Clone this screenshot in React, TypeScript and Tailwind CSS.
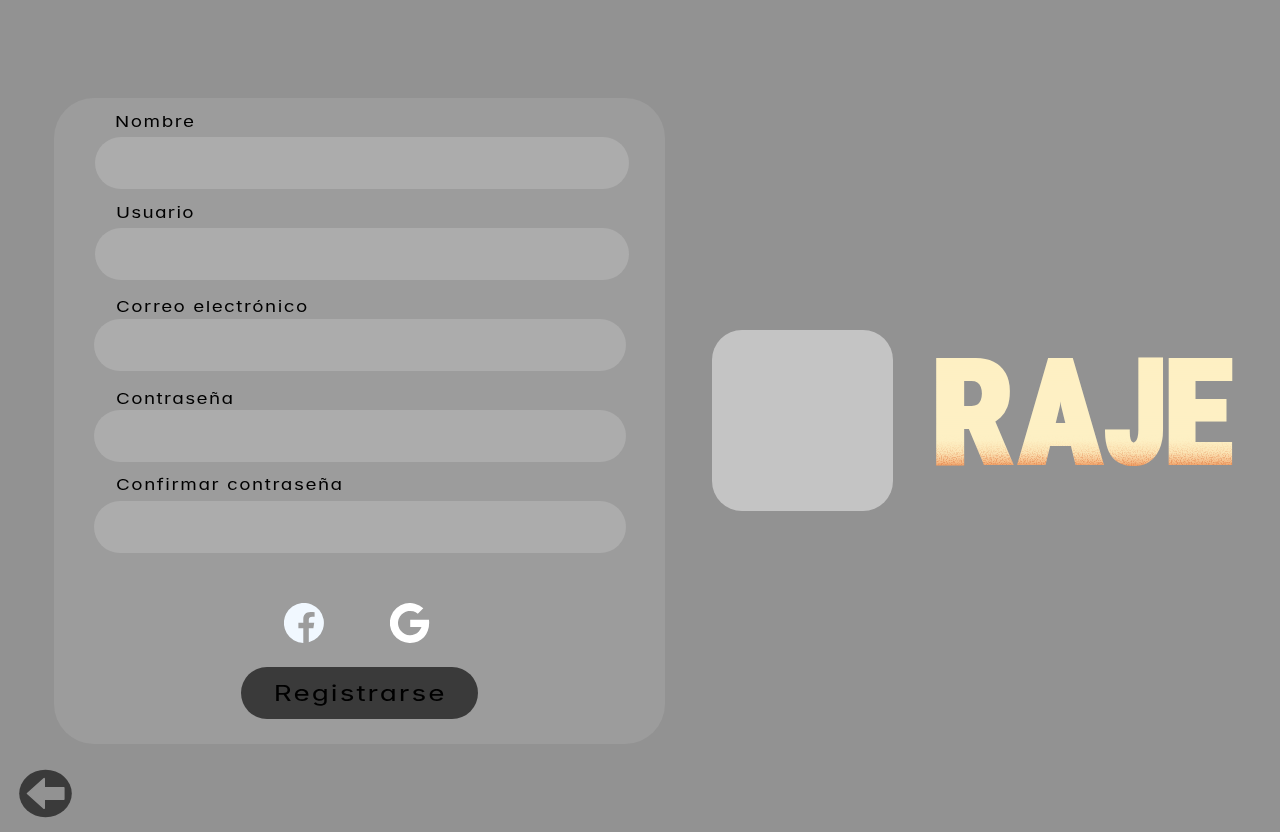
const fields = [
  { label: 'Nombre', type: 'text', labelBox: 'pl-[61px] pt-[14px]', tracking: 'tracking-[1.2px]', input: 'ml-[41px] w-[534px]' },
  { label: 'Usuario', type: 'text', labelBox: 'pl-[62px] pt-[14px]', tracking: 'tracking-[1px]', input: 'ml-[41px] w-[534px]' },
  { label: 'Correo electrónico', type: 'email', labelBox: 'pl-[62px] pt-[17px]', tracking: 'tracking-[1.15px]', input: 'ml-[40px] w-[532px]' },
  { label: 'Contraseña', type: 'password', labelBox: 'pl-[62px] pt-[18px]', tracking: 'tracking-[1.1px]', input: 'ml-[40px] w-[532px]' },
  { label: 'Confirmar contraseña', type: 'password', labelBox: 'pl-[62px] pt-[13px]', tracking: 'tracking-[1.2px]', input: 'ml-[40px] w-[532px]' },
];

function FacebookIcon() {
  return (
    <svg viewBox="0 0 40 40" className="size-10">
      <path
        fill="#f1f8ff"
        d="M19.3 39.9A20 20 0 1 1 24.8 39.3V25.3H29.4L30.2 19.7H24.8V16.7C24.8 14.8 26 13.8 28.2 13.8H30.6V9.2C29.7 9 28.3 8.9 26.6 8.9C21.8 8.9 19.3 11.6 19.3 16.5V19.7H14.4V25.3H19.3Z"
      />
    </svg>
  );
}

function GoogleIcon() {
  return (
    <svg viewBox="0 0 40 40" className="size-10">
      <path
        fill="#fff"
        d="M33.3 5.2L27.8 10.7A12.1 12.1 0 1 0 31.5 24.1H20.2V16.7H39C40.5 29.6 32.6 40 20.2 40A20 20 0 1 1 33.3 5.2Z"
      />
    </svg>
  );
}

function Wordmark() {
  return (
    <svg viewBox="0 0 310 130" className="h-[130px] w-[310px]">
      <defs>
        <linearGradient id="sand" gradientUnits="userSpaceOnUse" x1="0" y1="8" x2="0" y2="116">
          <stop offset="0" stopColor="#fef0c3" />
          <stop offset="0.76" stopColor="#fdf0c4" />
          <stop offset="0.88" stopColor="#fbe3b4" />
          <stop offset="0.96" stopColor="#f5c08c" />
          <stop offset="1" stopColor="#ee9c62" />
        </linearGradient>
        <filter id="grain" filterUnits="userSpaceOnUse" x="0" y="0" width="310" height="130" colorInterpolationFilters="sRGB">
          <feMorphology in="SourceGraphic" operator="dilate" radius="2 0" result="bold" />
          <feTurbulence type="fractalNoise" baseFrequency="0.8" numOctaves="2" seed="4" />
          <feColorMatrix values="0 0 0 0 0.9  0 0 0 0 0.54  0 0 0 0 0.32  4 0 0 0 -1.8" result="dots" />
          <feFlood x="0" y="107" width="310" height="23" floodColor="#fff" />
          <feGaussianBlur stdDeviation="0 9" x="0" y="0" width="310" height="130" result="fade" />
          <feComposite in="dots" in2="fade" operator="in" result="faded" />
          <feComposite in="faded" in2="bold" operator="in" result="cut" />
          <feMerge>
            <feMergeNode in="bold" />
            <feMergeNode in="cut" />
          </feMerge>
        </filter>
      </defs>
      <text
        y="113"
        fill="url(#sand)"
        stroke="url(#sand)"
        strokeWidth="3.8"
        strokeLinejoin="miter"
        filter="url(#grain)"
        className="font-['Roboto',sans-serif] text-[145px] font-black"
      >
        <tspan x="3.2" textLength="79" lengthAdjust="spacingAndGlyphs">R</tspan>
        <tspan x="91.4" textLength="78" lengthAdjust="spacingAndGlyphs">A</tspan>
        <tspan x="176.4" textLength="58.8" lengthAdjust="spacingAndGlyphs">J</tspan>
        <tspan x="236" textLength="64.4" lengthAdjust="spacingAndGlyphs">E</tspan>
      </text>
    </svg>
  );
}

export default function App() {
  return (
    <main className="relative flex h-[832px] w-[1280px] items-start overflow-hidden bg-[#929292] pl-[54px] pt-[98px] font-['Inter',sans-serif] text-black">
      <form className="flex h-[646px] w-[611px] flex-col rounded-[40px] bg-[#9c9c9c]">
        {fields.map((f) => (
          <label key={f.label} className="flex h-[91px] flex-col">
            <span className={`h-[39px] whitespace-nowrap text-[15px] leading-5 ${f.labelBox}`}>
              <span className={`inline-block origin-left scale-x-[1.26] [font-feature-settings:'cv11'] ${f.tracking}`}>
                {f.label}
              </span>
            </span>
            <input type={f.type} className={`h-[52px] rounded-full bg-[#acacac] px-6 outline-none ${f.input}`} />
          </label>
        ))}
        <div className="mt-[50px] flex gap-[66px] pl-[230px]">
          <button type="button" aria-label="Facebook"><FacebookIcon /></button>
          <button type="button" aria-label="Google"><GoogleIcon /></button>
        </div>
        <button
          type="button"
          className="ml-[187px] mt-6 flex h-[52px] w-[237px] items-center justify-center rounded-full bg-[#3a3a3a] text-[22px]"
        >
          <span className="inline-block scale-x-[1.27] pl-px tracking-[1.6px] [font-feature-settings:'cv11']">Registrarse</span>
        </button>
      </form>
      <div className="ml-[47px] mt-[232px] size-[181px] rounded-[30px] bg-[#c4c4c4]" />
      <div className="ml-[37px] mt-[252px] shrink-0">
        <Wordmark />
      </div>
      <button type="button" aria-label="Volver" className="absolute left-[19px] top-[769px]">
        <svg viewBox="0 0 53 49" className="h-[49px] w-[53px]">
          <ellipse cx="26.5" cy="24.5" rx="26.3" ry="23.7" fill="#3a3a3a" />
          <path
            d="M8.5 24.5L25.2 9.7V18.8H44.8V30.2H25.2V39.3Z"
            fill="#929292"
            stroke="#929292"
            strokeWidth="1.6"
            strokeLinejoin="round"
          />
        </svg>
      </button>
    </main>
  );
}
